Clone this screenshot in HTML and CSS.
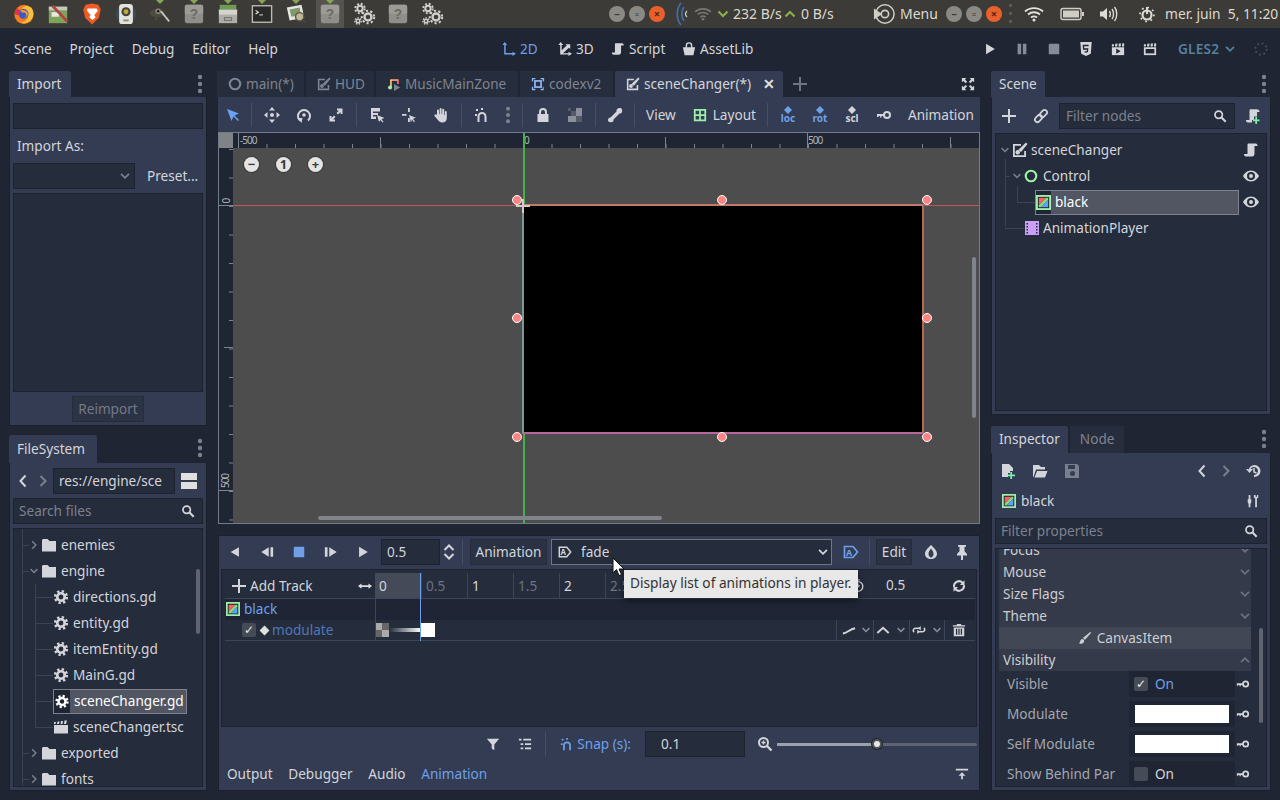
FILE: index.html
```html
<!DOCTYPE html>
<html lang="fr">
<head>
<meta charset="utf-8">
<title>Godot editor</title>
<link rel="stylesheet" href="styles.css">
</head>
<body>
<svg class="defs" width="0" height="0" aria-hidden="true">
  <symbol id="chev-d" viewBox="0 0 16 16"><path d="M3.5 5.5 8 10l4.5-4.5" fill="none" stroke="currentColor" stroke-width="2"/></symbol>
  <symbol id="chev-u" viewBox="0 0 16 16"><path d="M3.5 10.500 8 6l4.500 4.500" fill="none" stroke="currentColor" stroke-width="2"/></symbol>
  <symbol id="chev-r" viewBox="0 0 16 16"><path d="M5.500 3 10.500 8l-5 5" fill="none" stroke="currentColor" stroke-width="2"/></symbol>
  <symbol id="chev-l" viewBox="0 0 16 16"><path d="M10.500 2.500 5.500 8l5 5.500" fill="none" stroke="currentColor" stroke-width="2"/></symbol>
  <symbol id="gear" viewBox="-1 -1 18 18"><circle cx="8" cy="8" r="4.200" fill="none" stroke="currentColor" stroke-width="3"/><circle cx="8" cy="8" r="6.500" fill="none" stroke="currentColor" stroke-width="3" stroke-dasharray="2.550 2.550"/></symbol>
  <symbol id="folder" viewBox="0 0 16 16"><path d="M2 2h4.500l2 2H15v10.500H1V3z" fill="currentColor"/></symbol>
  <symbol id="scene-file" viewBox="0 0 16 16"><path d="M1 6h14v8.500H1z" fill="currentColor"/><path d="M1 3h2l-.5 2H1zm3.500-.5h2L6 5H4zm3.500-.5h2L9.500 5h-2zm3.500-.5h2.500L13 5h-2z" fill="currentColor"/></symbol>
  <symbol id="search" viewBox="0 0 16 16"><circle cx="6.500" cy="6.500" r="4.200" fill="none" stroke="currentColor" stroke-width="2"/><path d="m9.500 9.500 5 5" stroke="currentColor" stroke-width="2.400"/></symbol>
  <symbol id="key" viewBox="0 0 16 16"><circle cx="11" cy="8" r="3" fill="none" stroke="currentColor" stroke-width="2"/><path d="M1 7h7v2H5.500v1.500H4V9H2.500v1H1z" fill="currentColor"/></symbol>
  <symbol id="eye" viewBox="0 0 16 16"><path d="M8 2.500C4 2.500 1.500 5.500 0 8c1.500 2.500 4 5.500 8 5.500s6.500-3 8-5.500c-1.500-2.500-4-5.500-8-5.500zm0 1.500a4 4 0 1 1 0 8 4 4 0 0 1 0-8z" fill="currentColor"/><circle cx="8" cy="8" r="2" fill="currentColor"/></symbol>
  <symbol id="script" viewBox="0 0 16 16"><path d="M5 1.500h7.500c1.500 0 2 1 2 2.500h-3v7.500c0 2-1 3-2.500 3H3c-1.500 0-2-1-2-2.500h3.500V3c0-1 .5-1.500.5-1.500z" fill="currentColor"/></symbol>
  <symbol id="script-add" viewBox="0 0 16 16"><path d="M5 1.500h7.500c1.500 0 2 1 2 2.500h-3v4H9v2H7v2H4.500H1c0 1.500.5 2.500 2 2.500h4V12" fill="currentColor"/><path d="M4.500 12V3c0-1 .5-1.500.5-1.500h7v7H9v3.500z" fill="currentColor"/><path d="M12 9v2.500h2.500v1.700H12V16h-1.700v-2.800H8v-1.700h2.300V9z" fill="#7cf0a8"/></symbol>
  <symbol id="link" viewBox="0 0 16 16"><g fill="none" stroke="currentColor" stroke-width="1.800"><rect x="8" y="1.500" width="5" height="8" rx="2.500" transform="rotate(45 10.500 5.500)"/><rect x="3" y="6.500" width="5" height="8" rx="2.500" transform="rotate(45 5.500 10.500)"/></g></symbol>
  <symbol id="plus" viewBox="0 0 16 16"><path d="M7 1h2v6h6v2H9v6H7V9H1V7h6z" fill="currentColor"/></symbol>
  <symbol id="ring" viewBox="0 0 16 16"><circle cx="8" cy="8" r="6" fill="none" stroke="currentColor" stroke-width="2.400"/></symbol>
  <symbol id="colorrect" viewBox="0 0 16 16"><rect width="16" height="16" fill="#9ef0a8"/><rect x="2" y="2" width="12" height="12" fill="#1a1f2b"/><path d="M3 3h8L3 11z" fill="#ff5f5f"/><path d="M13 5v8H5z" fill="#5fa0ff"/><path d="M11 3h2v2l-8 8H3v-2z" fill="#7ee07e"/></symbol>
  <symbol id="animplayer" viewBox="0 0 16 16"><path d="M1 1h14v14H1z" fill="#c9a0f5"/><path d="M2.500 3h1.500v1.500H2.500zm0 3h1.500v1.500H2.500zm0 3h1.500v1.500H2.500zm0 3h1.500v1.500H2.500zm9.500-9h1.500v1.500H12zm0 3h1.500v1.500H12zm0 3h1.500v1.500H12zm0 3h1.500v1.500H12z" fill="#252c3b"/></symbol>
  <symbol id="scene2d" viewBox="0 0 16 16"><path d="M1 2h8v1.800H2.800v9.400h9.400V9H14v6H1z" fill="currentColor"/><path d="M14 .5l1.500 1.500-6.500 8-2.800-2z" fill="currentColor"/><circle cx="5.700" cy="10.300" r="2.200" fill="currentColor"/></symbol>
  <symbol id="music" viewBox="0 0 16 16"><path d="M4 3.500h9" stroke="#ff9a6a" stroke-width="2"/><path d="M4.500 3v8" stroke="#ffd080" stroke-width="1.800"/><circle cx="3.500" cy="12" r="2.300" fill="#9ef0a8"/><path d="M12.500 3v5" stroke="#ff7a8a" stroke-width="1.800"/><path d="M8 8l7 4-7 4z" fill="currentColor"/></symbol>
  <symbol id="viewport" viewBox="0 0 16 16"><path d="M1 5V1h4v1.500H2.500V5zm10-4h4v4h-1.500V2.500H11zM1 11h1.500v2.500H5V15H1zm13.500 0V15H11v-1.500h2.500V11z" fill="#8eb5f5"/><rect x="4.500" y="4.500" width="7" height="7" fill="none" stroke="#8eb5f5" stroke-width="2"/></symbol>
  <symbol id="fullscreen" viewBox="0 0 16 16"><path d="M1 1h5L4.500 2.800 7 5.300 5.300 7 2.800 4.500 1 6zm14 0v5l-1.800-1.500L10.700 7 9 5.300l2.500-2.500L10 1zM1 15v-5l1.800 1.500L5.300 9 7 10.700l-2.500 2.500L6 15zm14 0h-5l1.500-1.800L9 10.700 10.700 9l2.500 2.500L15 10z" fill="currentColor"/></symbol>
  <symbol id="dots" viewBox="0 0 6 20"><circle cx="3" cy="3" r="2.200" fill="currentColor"/><circle cx="3" cy="10" r="2.200" fill="currentColor"/><circle cx="3" cy="17" r="2.200" fill="currentColor"/></symbol>
  <symbol id="select" viewBox="0 0 16 16"><path d="M2 2l12 4.500-4.500 2L14 13l-1 1-4.500-4.500L6.500 14z" fill="#6aa2f5"/></symbol>
  <symbol id="move" viewBox="0 0 16 16"><path d="M8 0l3 3.500H5zm0 16l-3-3.500h6zM0 8l3.500-3v6zm16 0-3.500 3V5z" fill="currentColor"/><circle cx="8" cy="8" r="2" fill="currentColor"/></symbol>
  <symbol id="rotate" viewBox="0 0 16 16"><path d="M4 13.500a6 6 0 1 1 8 0" fill="none" stroke="currentColor" stroke-width="2"/><path d="M1.500 11l5 0-1 5z" fill="currentColor"/><circle cx="8" cy="8" r="1.800" fill="currentColor"/></symbol>
  <symbol id="scale" viewBox="0 0 16 16"><path d="M9 1.500h5.500V7h-2V5L10 7.500 8.500 6 11 3.500H9zM5 12.500h2v2H1.500V9h2v2L6 8.500 7.500 10z" fill="currentColor"/></symbol>
  <symbol id="listsel" viewBox="0 0 16 16"><path d="M2 1h9v3.500H4V6h5v2H4v1.500h3V12H2z" fill="currentColor"/><path d="M8 8l7.500 3-3 1.200 2 2.600-1 .7-2-2.600L10 15z" fill="currentColor"/></symbol>
  <symbol id="pivot" viewBox="0 0 16 16"><path d="M7 1h1.800v4H7zM1 7h4.500v1.800H1zm6 4h1.800v4H7z" fill="currentColor"/><path d="M8 8l7 2.800-3 1 2 2.600-1 .8-2-2.600-1 2.800z" fill="currentColor"/></symbol>
  <symbol id="hand" viewBox="0 0 16 16"><path d="M4 7V3.500a1 1 0 0 1 2 0V7h.6V2a1 1 0 0 1 2 0v5h.6V2.800a1 1 0 0 1 2 0V8h.6V5a1 1 0 0 1 2 0v6c0 3-2 4.500-4.500 4.500S5.500 14 4.500 12.500L1.500 9c-.6-1 .8-2 1.700-1z" fill="currentColor"/></symbol>
  <symbol id="magnet" viewBox="0 0 16 16"><path d="M4.500 15V9.500a3.500 3.500 0 0 1 7 0V15" fill="none" stroke="currentColor" stroke-width="2"/><path d="M2 2h2v2H2zM1 7h2v2H1zM7 1h2v2H7z" fill="currentColor"/></symbol>
  <symbol id="lock" viewBox="0 0 16 16"><path d="M2.500 7H4V5a4 4 0 0 1 8 0v2h1.500v8h-11zM6 7h4V5a2 2 0 0 0-4 0z" fill="currentColor"/></symbol>
  <symbol id="group" viewBox="0 0 16 16"><path d="M9 1h6v8H9z" fill="#8a8f99"/><path d="M1 9h8v6H1z" fill="#8a8f99"/><path d="M1 1h3v3H1zm8 8h6v6H9zM4 4h5v5H4z" fill="#555b66"/></symbol>
  <symbol id="bone" viewBox="0 0 16 16"><path d="M13 1c2 0 2.500 2 2 3 .5 1-.5 3-2.500 2.500L6.500 12.500C7 14.500 5 15.500 4 15c-1 .5-3 0-3-2s2-2.500 2.500-2.500l6-6C9 2.500 11 .5 13 1z" fill="currentColor"/></symbol>
  <symbol id="layout" viewBox="0 0 16 16"><path d="M1 1h14v14H1zm2 2v4h4V3zm6 0v4h4V3zM3 9v4h4V9zm6 0v4h4V9z" fill="#9ef0a8"/></symbol>
  <symbol id="diamond" viewBox="0 0 16 18"><path d="M8 0l4 4-4 4-4-4z" fill="currentColor"/></symbol>
  <symbol id="bl-play" viewBox="0 0 16 16"><path d="M3.500 2l10 6-10 6z" fill="currentColor"/></symbol>
  <symbol id="bl-pause" viewBox="0 0 16 16"><path d="M3 2h4v12H3zm6 0h4v12H9z" fill="currentColor"/></symbol>
  <symbol id="bl-stop" viewBox="0 0 16 16"><rect x="2" y="2" width="12" height="12" rx="1" fill="currentColor"/></symbol>
  <symbol id="html5" viewBox="0 0 16 16"><path d="M1.500 0h13l-1 13.500L8 16l-5.500-2.500z" fill="currentColor"/><path d="M11 4H5l.3 4h4.600l-.3 3-1.600.5-1.600-.5" fill="none" stroke="#1f2532" stroke-width="1.500"/></symbol>
  <symbol id="clap-play" viewBox="0 0 16 16"><path d="M1 6h14v9H1z" fill="currentColor"/><path d="M1 2.500h2.500L3 5H1zM5 2l2.500-.2L7 5H4.500zM9 1.800h2.500L11 5H8.500zM13 1.500h2V5h-2.500z" fill="currentColor"/><path d="M6 7.500l5 3-5 3z" fill="#1f2532"/></symbol>
  <symbol id="clap" viewBox="0 0 16 16"><path d="M1 6h14v9H1z" fill="currentColor"/><path d="M3 8h10v5H3z" fill="#1f2532"/><path d="M1 2.500h2.500L3 5H1zM5 2l2.500-.2L7 5H4.500zM9 1.800h2.500L11 5H8.500zM13 1.500h2V5h-2.500z" fill="currentColor"/></symbol>
  <symbol id="axis2d" viewBox="0 0 16 16"><path d="M3 0l3 3.500H4.200v9H12V11l4 2.500L12 16v-1.700H2.500V3.500H.5z" fill="currentColor"/></symbol>
  <symbol id="axis3d" viewBox="0 0 16 16"><path d="M3 0l3 3.500H4.200v6L10 4 8.500 2.500H14V8l-1.500-1.500-6.800 6.300H12V11l4 2.500L12 16v-1.700H2.500V3.500H.5z" fill="currentColor"/></symbol>
  <symbol id="bag" viewBox="0 0 16 16"><path d="M1 6h14l-2 9H3z" fill="currentColor"/><path d="M5 7V4a3 3 0 0 1 6 0v3" fill="none" stroke="currentColor" stroke-width="1.600"/></symbol>
  <symbol id="step-back" viewBox="0 0 16 16"><path d="M10 2.500v11L1.500 8zM12 2.500h3v11h-3z" fill="currentColor"/></symbol>
  <symbol id="step-fwd" viewBox="0 0 16 16"><path d="M1 2.500h3v11H1zM6 2.500 14.500 8 6 13.500z" fill="currentColor"/></symbol>
  <symbol id="back" viewBox="0 0 16 16"><path d="M12.500 2.500v11L3 8z" fill="currentColor"/></symbol>
  <symbol id="updown" viewBox="0 0 16 16"><path d="M3.500 6 8 1.500 12.500 6M3.500 10 8 14.500 12.500 10" fill="none" stroke="currentColor" stroke-width="2"/></symbol>
  <symbol id="anim" viewBox="0 0 16 16"><path d="M1.500 2.500h8.500L14.500 8 10 13.500H1.500z" fill="none" stroke="currentColor" stroke-width="1.700"/></symbol>
  <symbol id="onion" viewBox="0 0 16 16"><path d="M8 1C5 4 2 6.500 2 10c0 3 3 5 6 5s6-2 6-5c0-3.500-3-6-6-9zM8 4.500C9.500 6.500 10.500 8 10.500 10S9 13.500 8 13.500 5.500 12 5.500 10 6.500 6.500 8 4.500z" fill="currentColor" fill-rule="evenodd"/></symbol>
  <symbol id="pin" viewBox="0 0 16 16"><path d="M4 1h8v1.800h-1.500v4.500L13 10v1.500H9V16H7v-4.500H3V10l2.500-2.700V2.800H4z" fill="currentColor"/></symbol>
  <symbol id="loop" viewBox="0 0 16 16"><path d="M2 9A6 6 0 0 1 12 3.800l1.500-1.500V7H9l1.500-1.700A4 4 0 0 0 4 8.700zM14 7a6 6 0 0 1-10 5.200l-1.500 1.500V9H7l-1.500 1.700A4 4 0 0 0 12 7.300z" fill="currentColor"/></symbol>
  <symbol id="clock" viewBox="0 0 16 16"><circle cx="8" cy="8.500" r="5.500" fill="none" stroke="currentColor" stroke-width="1.500"/><path d="M8 5v4l2-1.500M6 1h4" fill="none" stroke="currentColor" stroke-width="1.500"/></symbol>
  <symbol id="curve" viewBox="0 0 16 16"><path d="M1 12c5 0 7-5 14-6" fill="none" stroke="currentColor" stroke-width="2.200"/></symbol>
  <symbol id="cap" viewBox="0 0 16 16"><path d="M1.500 11.500 8 5.500l6.500 6" fill="none" stroke="currentColor" stroke-width="2.200"/></symbol>
  <symbol id="wrap" viewBox="0 0 16 16"><path d="M10 3.500 7 6l3 2.500zM6 7.500 9 10l-3 2.500z" fill="currentColor"/><path d="M8 6H4a2.500 2.500 0 0 0-1.500 4.500M8 10h4a2.500 2.500 0 0 0 1.500-4.500" fill="none" stroke="currentColor" stroke-width="1.800"/></symbol>
  <symbol id="trash" viewBox="0 0 16 16"><path d="M5.500 1h5v1.500H15V4H1V2.500h4.500zM2 5h12v10H2zm2.500 1.500V13.500H6V6.500zm2.800 0v7h1.400v-7zm2.700 0v7h1.500v-7z" fill="currentColor"/></symbol>
  <symbol id="filter" viewBox="0 0 16 16"><path d="M1 2h14L9.500 8.500V15l-3-2V8.500z" fill="currentColor"/></symbol>
  <symbol id="tracks" viewBox="0 0 16 16"><path d="M1 2h3v2H1zm5 0h9v2H6zM3 7h3v2H3zm5 0h7v2H8zm-5 5h3v2H3zm5 0h7v2H8z" fill="currentColor"/></symbol>
  <symbol id="zoomin" viewBox="0 0 16 16"><circle cx="6.500" cy="6.500" r="4.500" fill="none" stroke="currentColor" stroke-width="2"/><path d="m10 10 4.500 4.500" stroke="currentColor" stroke-width="2.400"/><path d="M4.500 5.800h1.300V4.500h1.400v1.300h1.300v1.400H7.200v1.300H5.800V7.200H4.500z" fill="currentColor"/></symbol>
  <symbol id="collapse" viewBox="0 0 16 16"><path d="M1 2h14v2H1zM8 6l4 4H9v4H7v-4H4z" fill="currentColor"/></symbol>
  <symbol id="file-add" viewBox="0 0 16 16"><path d="M2 1h7l4 4v3h-3v2H8v4H2z" fill="currentColor"/><path d="M12 9v2.500h3v1.700h-3V16h-1.700v-2.800H8v-1.700h2.300V9z" fill="#7cf0a8"/></symbol>
  <symbol id="folder-open" viewBox="0 0 16 16"><path d="M1 2h6l2 2h4v2.500H4L1.500 14H1zM5 8h10.500L13 14.500H2.500z" fill="currentColor"/></symbol>
  <symbol id="save" viewBox="0 0 16 16"><path d="M1 1h12l2 2v12H1zm3 1v4h7V2zm4.500 6a2.500 2.500 0 1 0 0 5 2.500 2.500 0 0 0 0-5z" fill="currentColor" fill-rule="evenodd"/></symbol>
  <symbol id="history" viewBox="0 0 16 16"><path d="M2.500 8A6 6 0 1 1 8 14v-2a4 4 0 1 0-3.500-6H7L3.500 10 0 6h2.500z" fill="currentColor"/><path d="M8 5v4l2.500 1" fill="none" stroke="currentColor" stroke-width="1.500"/></symbol>
  <symbol id="tools" viewBox="0 0 16 16"><path d="M3 1h2v5h1v4L5 11v4H3v-4L2 10V6h1z" fill="currentColor"/><path d="M9 1v3l1.500 1v10h2V5L14 4V1h-1.500v2h-1.500V1z" fill="currentColor"/></symbol>
  <symbol id="brush" viewBox="0 0 16 16"><path d="M14 1l1 1-7 8-2.500-2z" fill="currentColor"/><path d="M4.500 9c2 0 3 1.500 2.500 3-.5 2-3 3-6 2.500 1.500-1 1-4.500 3.500-5.500z" fill="currentColor"/></symbol>
  <symbol id="hsize" viewBox="0 0 16 16"><path d="M0 8l4-3v2h8V5l4 3-4 3V9H4v2z" fill="currentColor"/></symbol>
  <symbol id="grip" viewBox="0 0 4 24"><rect y="2" width="3" height="3" fill="currentColor"/><rect y="10" width="3" height="3" fill="currentColor"/><rect y="18" width="3" height="3" fill="currentColor"/></symbol>
  <symbol id="gears" viewBox="0 0 24 24"><circle cx="8" cy="6.500" r="2.700" fill="none" stroke="currentColor" stroke-width="2"/><circle cx="8" cy="6.500" r="4.800" fill="none" stroke="currentColor" stroke-width="1.800" stroke-dasharray="2 1.800"/><circle cx="16" cy="15" r="3.500" fill="none" stroke="currentColor" stroke-width="2.400"/><circle cx="16" cy="15" r="6.200" fill="none" stroke="currentColor" stroke-width="2" stroke-dasharray="2.200 2.200"/><circle cx="6" cy="19" r="1.800" fill="none" stroke="currentColor" stroke-width="1.500"/><circle cx="6" cy="19" r="3.200" fill="none" stroke="currentColor" stroke-width="1.300" stroke-dasharray="1.500 1.300"/></symbol>
  <symbol id="unknown" viewBox="0 0 24 24"><rect x="2" y="2" width="20" height="20" rx="2" fill="#8f8e89"/><rect x="2" y="2" width="20" height="10" rx="2" fill="#9c9b96"/></symbol>
  <symbol id="firefox" viewBox="0 0 24 24"><circle cx="12" cy="12.500" r="10.500" fill="#ff7a1a"/><path d="M20 5c3 4 3 9 0 13-3 4-9 5-13 3 5 .5 9-2 9-6 0-3-3-4-5-3.500C10 10 12 8 14 8c-1-2-3-2-5-1.500C11 3 16 2 20 5z" fill="#f5c13c"/><circle cx="11.500" cy="12" r="5.500" fill="#3d59c9"/><path d="M8 8c3-1 7 0 8 3s-2 6-5 5.500c3 0 4-2 3.500-4S12 10 10 10.500z" fill="#ff9a30"/><path d="M2 12c0-3 1-5 3-7 0 2 1 3 3 3l-2 5c-2 0-3 0-4-1z" fill="#e0324e"/></symbol>
  <symbol id="tool" viewBox="0 0 24 24"><rect x="2" y="4" width="20" height="18" fill="#7fa35a"/><rect x="2" y="4" width="20" height="4" fill="#c7c6c0"/><rect x="5" y="10" width="8" height="5" fill="#e7e6e0"/><path d="M6 3 22 20" stroke="#b0413e" stroke-width="3"/></symbol>
  <symbol id="brave" viewBox="0 0 24 24"><path d="M5 2 12 .5 19 2l2.500 5-2 9-7.500 7.500L4.500 16l-2-9z" fill="#f05a23"/><path d="M7 6h10l1.500 2.500-4 4.500 1.500 2.500-3.500 3-3.500-3 1.500-2.500-4-4.500z" fill="#fff"/></symbol>
  <symbol id="phone" viewBox="0 0 24 24"><circle cx="12" cy="12" r="11" fill="#3c4a5a"/><rect x="4.500" y="1" width="15" height="22" rx="3.500" fill="#e4e4dc"/><circle cx="12" cy="9.500" r="5" fill="#45443c"/><circle cx="12" cy="9.500" r="2.700" fill="#c2a83c"/><rect x="9" y="18" width="6" height="2" fill="#888"/></symbol>
  <symbol id="gimp" viewBox="0 0 24 24"><ellipse cx="9" cy="11" rx="8" ry="4.500" fill="#4f4b3e"/><circle cx="10" cy="9" r="3" fill="#8c8a80"/><circle cx="10" cy="9" r="1.300" fill="#111"/><path d="M13 9l9 11" stroke="#c9c7bc" stroke-width="2"/><path d="M9 15l-2 4" stroke="#4f4b3e" stroke-width="2"/></symbol>
  <symbol id="archive" viewBox="0 0 24 24"><rect x="3" y="2" width="18" height="5" fill="#6f9a54"/><rect x="2" y="7" width="20" height="6" fill="#d4d3cd"/><rect x="2" y="13" width="20" height="9" fill="#aeada7"/><rect x="8" y="16" width="8" height="3" fill="none" stroke="#6a6964"/></symbol>
  <symbol id="terminal" viewBox="0 0 24 24"><rect x="1.500" y="3" width="21" height="18" fill="#2a2a28" stroke="#bab9b3" stroke-width="1.500"/><path d="m5 8 3 2-3 2" fill="none" stroke="#eee" stroke-width="1.200"/><path d="M9 13h4" stroke="#eee"/></symbol>
  <symbol id="viewer" viewBox="0 0 24 24"><path d="M2 5 18 2l3 14-16 3z" fill="#e6e5df"/><path d="M5 7l11-2 1.500 8L7 15z" fill="#7f9a6a"/><circle cx="16" cy="15" r="4.500" fill="#c0b690" stroke="#55544f" stroke-width="1.500"/><path d="m19 18 4 4" stroke="#45443f" stroke-width="2"/></symbol>
  <symbol id="menu-ic" viewBox="0 0 24 24"><circle cx="13" cy="12" r="10" fill="none" stroke="#cfcdc5" stroke-width="1.600"/><circle cx="13" cy="12" r="4" fill="none" stroke="#cfcdc5" stroke-width="1.800"/><path d="M1 6l9 6-9 6z" fill="#cfcdc5"/></symbol>
  <symbol id="wifi" viewBox="0 0 20 16"><path d="M1 5.500c5-4.500 13-4.500 18 0M4 8.500c3.500-3 8.500-3 12 0M7 11.500c2-1.500 4-1.500 6 0" fill="none" stroke="currentColor" stroke-width="1.800"/><circle cx="10" cy="14" r="1.500" fill="currentColor"/></symbol>
  <symbol id="battery" viewBox="0 0 24 14"><rect x="1" y="1.500" width="20" height="11" rx="2" fill="none" stroke="currentColor" stroke-width="1.500"/><rect x="3" y="3.500" width="16" height="7" fill="currentColor"/><rect x="22" y="5" width="2" height="4" fill="currentColor"/></symbol>
  <symbol id="volume" viewBox="0 0 20 16"><path d="M1 5.500h3L8 2v12l-4-3.500H1z" fill="currentColor"/><path d="M10.500 5c1 1.500 1 4.500 0 6M13 3c2 2.500 2 7.500 0 10M15.500 1c3 3.500 3 10.500 0 14" fill="none" stroke="currentColor" stroke-width="1.400"/></symbol>
  <symbol id="power" viewBox="0 0 16 16"><circle cx="8" cy="9" r="4.500" fill="none" stroke="currentColor" stroke-width="2.200"/><path d="M8 1v7" stroke="currentColor" stroke-width="2"/><circle cx="8" cy="8.500" r="7" fill="none" stroke="currentColor" stroke-width="1.700" stroke-dasharray="1.800 3.700"/></symbol>
  <symbol id="waves" viewBox="0 0 16 24"><path d="M6 1C1 7 1 17 6 23M9 5C6 9 6 15 9 19" fill="none" stroke="#3f6fa8" stroke-width="1.700"/><path d="M12 9c-2 2-2 4 0 6" fill="none" stroke="#c9c8c2" stroke-width="1.300"/></symbol>
  <symbol id="spinner" viewBox="0 0 16 16"><circle cx="8" cy="8" r="6.500" fill="none" stroke="currentColor" stroke-width="2" stroke-dasharray="2 3.100"/></symbol>
</svg>

<div class="page">
  <header class="topbar">
    <div class="apps">
      <span class="app"><svg class="app-i"><use href="#firefox"/></svg></span>
      <span class="app"><svg class="app-i"><use href="#tool"/></svg></span>
      <span class="app"><svg class="app-i"><use href="#brave"/></svg></span>
      <span class="app"><svg class="app-i"><use href="#phone"/></svg></span>
      <span class="app run"><svg class="app-i"><use href="#gimp"/></svg></span>
      <span class="app run"><svg class="app-i" viewBox="0 0 24 24"><use href="#unknown"/><text class="q-text" x="12" y="17.500">?</text></svg></span>
      <span class="app run"><svg class="app-i"><use href="#archive"/></svg></span>
      <span class="app run"><svg class="app-i"><use href="#terminal"/></svg></span>
      <span class="app run"><svg class="app-i"><use href="#viewer"/></svg></span>
      <span class="app run active"><svg class="app-i" viewBox="0 0 24 24"><use href="#unknown"/><text class="q-text" x="12" y="17.500">?</text></svg></span>
      <span class="app"><svg class="app-i gears"><use href="#gears"/></svg></span>
      <span class="app"><svg class="app-i" viewBox="0 0 24 24"><use href="#unknown"/><text class="q-text" x="12" y="17.500">?</text></svg></span>
      <span class="app"><svg class="app-i gears"><use href="#gears"/></svg></span>
    </div>
    <div class="winbtns">
      <span class="wb">–</span><span class="wb">▫</span><span class="wb close">×</span>
    </div>
    <svg class="tb-waves"><use href="#waves"/></svg>
    <svg class="tb-wifi-dim"><use href="#wifi"/></svg>
    <svg class="tb-chev"><use href="#chev-d"/></svg>
    <span class="tb-text speed-down">232 B/s</span>
    <svg class="tb-chev"><use href="#chev-u"/></svg>
    <span class="tb-text speed-up">0 B/s</span>
    <svg class="tb-menu"><use href="#menu-ic"/></svg>
    <span class="tb-text menu-label">Menu</span>
    <div class="winbtns second">
      <span class="wb">–</span><span class="wb">▫</span><span class="wb close">×</span>
    </div>
    <svg class="tb-grip"><use href="#grip"/></svg>
    <svg class="tb-wifi"><use href="#wifi"/></svg>
    <svg class="tb-battery"><use href="#battery"/></svg>
    <svg class="tb-volume"><use href="#volume"/></svg>
    <svg class="tb-power"><use href="#power"/></svg>
    <span class="tb-text clock-label">mer. juin  5, 11:20</span>
  </header>

  <nav class="menubar">
    <div class="menus"><span>Scene</span><span>Project</span><span>Debug</span><span>Editor</span><span>Help</span></div>
    <div class="modes">
      <span class="mode current mode-2d"><svg class="i14"><use href="#axis2d"/></svg>2D</span>
      <span class="mode mode-3d"><svg class="i14"><use href="#axis3d"/></svg>3D</span>
      <span class="mode mode-script"><svg class="i14"><use href="#script"/></svg>Script</span>
      <span class="mode mode-asset"><svg class="i14"><use href="#bag"/></svg>AssetLib</span>
    </div>
    <div class="runbtns">
      <svg class="i14 run-btn"><use href="#bl-play"/></svg>
      <svg class="i14 run-btn dim"><use href="#bl-pause"/></svg>
      <svg class="i14 run-btn dim"><use href="#bl-stop"/></svg>
      <svg class="i14 run-btn"><use href="#html5"/></svg>
      <svg class="i14 run-btn"><use href="#clap-play"/></svg>
      <svg class="i14 run-btn"><use href="#clap"/></svg>
      <span class="gles">GLES2</span>
      <svg class="i14 gles-chev"><use href="#chev-d"/></svg>
      <svg class="i14 spin"><use href="#spinner"/></svg>
    </div>
  </nav>

  <main class="workspace">
    <section class="col">
      <div class="tabs">
        <span class="tab on import-tab">Import</span>
        <svg class="dock-dots"><use href="#dots"/></svg>
      </div>
      <div class="panel import-panel">
        <div class="field"></div>
        <div class="label-row">Import As:</div>
        <div class="select-row">
          <div class="field select-empty"><svg class="i14 dim2"><use href="#chev-d"/></svg></div>
          <span class="preset">Preset...</span>
        </div>
        <div class="field list-empty"></div>
        <div class="reimport-row"><span class="btn-disabled">Reimport</span></div>
      </div>
      <div class="tabs fs-tabs">
        <span class="tab on">FileSystem</span>
        <svg class="dock-dots"><use href="#dots"/></svg>
      </div>
      <div class="panel fs-panel">
        <div class="path-row">
          <svg class="i16 nav-l"><use href="#chev-l"/></svg>
          <svg class="i16 nav-r dim2"><use href="#chev-r"/></svg>
          <div class="field path">res://engine/sce</div>
          <span class="split"></span>
        </div>
        <div class="field search"><span class="ph">Search files</span><svg class="i14"><use href="#search"/></svg></div>
        <div class="tree fs-tree">
          <div class="row l1"><svg class="arrow dim2"><use href="#chev-r"/></svg><svg class="folder"><use href="#folder"/></svg><span>enemies</span></div>
          <div class="row l1"><svg class="arrow dim2"><use href="#chev-d"/></svg><svg class="folder"><use href="#folder"/></svg><span>engine</span></div>
          <div class="row l2"><svg class="i16"><use href="#gear"/></svg><span>directions.gd</span></div>
          <div class="row l2"><svg class="i16"><use href="#gear"/></svg><span>entity.gd</span></div>
          <div class="row l2"><svg class="i16"><use href="#gear"/></svg><span>itemEntity.gd</span></div>
          <div class="row l2"><svg class="i16"><use href="#gear"/></svg><span>MainG.gd</span></div>
          <div class="row l2 picked"><div class="sel fs-sel"><svg class="i16"><use href="#gear"/></svg><span>sceneChanger.gd</span></div></div>
          <div class="row l2"><svg class="i16"><use href="#scene-file"/></svg><span>sceneChanger.tsc</span></div>
          <div class="row l1"><svg class="arrow dim2"><use href="#chev-r"/></svg><svg class="folder"><use href="#folder"/></svg><span>exported</span></div>
          <div class="row l1"><svg class="arrow dim2"><use href="#chev-r"/></svg><svg class="folder"><use href="#folder"/></svg><span>fonts</span></div>
          <span class="vscroll fs-scroll"></span>
        </div>
      </div>
    </section>

    <section class="col">
      <div class="tabs scene-tabs">
        <span class="tab off st1"><svg class="i14"><use href="#ring"/></svg>main(*)</span>
        <span class="tab off st2"><svg class="i14"><use href="#scene2d"/></svg>HUD</span>
        <span class="tab off st3"><svg class="i14"><use href="#music"/></svg>MusicMainZone</span>
        <span class="tab off st4"><svg class="i14"><use href="#viewport"/></svg>codexv2</span>
        <span class="tab on st5"><svg class="i14"><use href="#scene2d"/></svg>sceneChanger(*)<span class="tab-x">✕</span></span>
        <svg class="i16 tab-add"><use href="#plus"/></svg>
        <svg class="i14 tab-full"><use href="#fullscreen"/></svg>
      </div>
      <div class="toolbar">
        <span class="tb first"><svg class="i16"><use href="#select"/></svg></span><i class="sep"></i>
        <span class="tb"><svg class="i16"><use href="#move"/></svg></span>
        <span class="tb"><svg class="i16"><use href="#rotate"/></svg></span>
        <span class="tb"><svg class="i16"><use href="#scale"/></svg></span><i class="sep"></i>
        <span class="tb"><svg class="i16"><use href="#listsel"/></svg></span>
        <span class="tb"><svg class="i16"><use href="#pivot"/></svg></span>
        <span class="tb"><svg class="i16"><use href="#hand"/></svg></span><i class="sep"></i>
        <span class="tb"><svg class="i16"><use href="#magnet"/></svg></span>
        <span class="tb narrow"><svg class="tb-dots"><use href="#dots"/></svg></span><i class="sep"></i>
        <span class="tb"><svg class="i16"><use href="#lock"/></svg></span>
        <span class="tb"><svg class="i16"><use href="#group"/></svg></span><i class="sep"></i>
        <span class="tb bone"><svg class="i16"><use href="#bone"/></svg></span><i class="sep"></i>
        <span class="tb-label view">View</span>
        <span class="tb-label layout"><svg class="i14"><use href="#layout"/></svg>Layout</span><i class="sep"></i>
        <span class="tb key-loc blue"><svg class="kf" viewBox="0 0 16 18"><use href="#diamond"/><text class="kf-text" x="8" y="16">loc</text></svg></span>
        <span class="tb blue"><svg class="kf" viewBox="0 0 16 18"><use href="#diamond"/><text class="kf-text" x="8" y="16">rot</text></svg></span>
        <span class="tb"><svg class="kf" viewBox="0 0 16 18"><use href="#diamond"/><text class="kf-text" x="8" y="16">scl</text></svg></span>
        <span class="tb"><svg class="i16"><use href="#key"/></svg></span>
        <span class="tb-label anim-label">Animation</span>
      </div>
      <div class="viewport">
        <div class="ruler-top">
          <svg class="ruler-svg" width="746" height="15"><defs><pattern id="tickx" x="5" width="28.500" height="15" patternUnits="userSpaceOnUse"><rect y="11" width="1" height="4" fill="#7d838f"/></pattern></defs><rect width="746" height="15" fill="url(#tickx)"/></svg>
          <span class="rlabel rx0">-500</span><span class="rlabel rx1">0</span><span class="rlabel rx2">500</span>
          <i class="rmajor rm0"></i><i class="rmajor rm1"></i><i class="rmajor rm2"></i><i class="rmajor rm3"></i><i class="rmajor rm4"></i><i class="rmajor rm5"></i>
        </div>
        <div class="ruler-left">
          <svg class="ruler-svg" width="14" height="375"><defs><pattern id="ticky" y="1" width="14" height="28.500" patternUnits="userSpaceOnUse"><rect x="10" width="4" height="1" fill="#7d838f"/></pattern></defs><rect width="14" height="375" fill="url(#ticky)"/></svg>
        </div>
        <span class="rlabel vl0">0</span><span class="rlabel vl1">500</span>
        <i class="vmajor vm0"></i><i class="vmajor vm1"></i><i class="vmajor vm2"></i>
        <span class="corner"></span>
        <div class="zoomers">
          <span class="zb">−</span><span class="zb">1</span><span class="zb">+</span>
        </div>
        <i class="axis-h"></i><i class="axis-v"></i>
        <div class="rect-black"></div>
        <i class="cross-h"></i><i class="cross-v"></i>
        <i class="handle h1"></i><i class="handle h2"></i><i class="handle h3"></i><i class="handle h4"></i><i class="handle h5"></i><i class="handle h6"></i><i class="handle h7"></i><i class="handle h8"></i>
        <i class="sb-h"></i><i class="sb-v"></i>
      </div>

      <div class="panel bottom-panel">
        <div class="transport">
          <span class="tb"><svg class="i14"><use href="#back"/></svg></span>
          <span class="tb"><svg class="i14"><use href="#step-back"/></svg></span>
          <span class="tb blue"><svg class="i14"><use href="#bl-stop"/></svg></span>
          <span class="tb"><svg class="i14"><use href="#step-fwd"/></svg></span>
          <span class="tb"><svg class="i14"><use href="#bl-play"/></svg></span>
          <div class="field t-input">0.5</div>
          <span class="t-spin"><svg class="i16"><use href="#updown"/></svg></span>
          <i class="sep t-sep"></i>
          <span class="btn-dark anim-btn">Animation</span>
          <div class="field anim-select"><svg class="i14" viewBox="0 0 16 16"><use href="#anim"/><text class="a-text" x="6" y="11.500">A</text></svg><span class="fade">fade</span><svg class="i14 sel-chev"><use href="#chev-d"/></svg></div>
          <svg class="i16 anim-blue" viewBox="0 0 16 16"><use href="#anim"/><text class="a-text" x="6" y="11.500">A</text></svg>
          <i class="sep edit-sep"></i>
          <span class="btn-dark edit-btn">Edit</span>
          <svg class="i16 onion"><use href="#onion"/></svg>
          <svg class="i16 pin"><use href="#pin"/></svg>
        </div>
        <div class="timeline">
          <div class="tl-head">
            <div class="tl-left"><svg class="i16"><use href="#plus"/></svg><span class="add-track">Add Track</span><svg class="i14 tl-arrow"><use href="#hsize"/></svg></div>
            <div class="tl-times">
              <span class="cell first-cell">0</span><span class="cell dim-t">0.5</span><span class="cell">1</span><span class="cell dim-t">1.5</span><span class="cell">2</span><span class="cell dim-t">2.5</span><span class="cell"></span><span class="cell"></span><span class="cell"></span><span class="cell"></span>
            </div>
            <div class="tl-right">
              <svg class="i14 tl-clock"><use href="#clock"/></svg>
              <span class="field tl-len">0.5</span>
              <svg class="i16 tl-loop"><use href="#loop"/></svg>
            </div>
          </div>
          <div class="tl-node">
            <svg class="i14"><use href="#colorrect"/></svg><span class="blue-t">black</span>
          </div>
          <div class="tl-track">
            <div class="tl-name"><span class="check on-c">✓</span><i class="diamond"></i><span class="blue-m">modulate</span></div>
            <div class="keys"><i class="k-check"></i><i class="k-grad"></i><i class="k-white"></i></div>
            <div class="tl-opts">
              <svg class="i14 o-curve"><use href="#curve"/></svg><svg class="o-chev c1"><use href="#chev-d"/></svg><i class="o-sep"></i>
              <svg class="i14 o-curve2"><use href="#cap"/></svg><svg class="o-chev c2"><use href="#chev-d"/></svg><i class="o-sep"></i>
              <svg class="i14 o-curve3"><use href="#wrap"/></svg><svg class="o-chev c1 c3"><use href="#chev-d"/></svg><i class="o-sep"></i>
              <svg class="i14 o-trash"><use href="#trash"/></svg>
            </div>
          </div>
          <i class="playhead"></i>
        </div>
        <div class="snap-row">
          <svg class="i14"><use href="#filter"/></svg>
          <svg class="i14 sr-tracks"><use href="#tracks"/></svg>
          <i class="sep sr-sep"></i>
          <svg class="i14 sr-snap"><use href="#magnet"/></svg>
          <span class="sr-text">Snap (s):</span>
          <span class="field sr-input">0.1</span>
          <svg class="i16 sr-zoom"><use href="#zoomin"/></svg>
          <span class="slider"><i class="slider-grab"></i></span>
        </div>
        <div class="bottom-tabs">
          <span>Output</span><span>Debugger</span><span>Audio</span><span class="current">Animation</span>
          <svg class="i14 bt-icon"><use href="#collapse"/></svg>
        </div>
      </div>
    </section>

    <section class="col">
      <div class="tabs">
        <span class="tab on">Scene</span>
        <svg class="dock-dots right-dots"><use href="#dots"/></svg>
      </div>
      <div class="panel scene-panel">
        <div class="sc-tools">
          <svg class="i16 sc-plus"><use href="#plus"/></svg>
          <svg class="i16 sc-link"><use href="#link"/></svg>
          <div class="field sc-filter"><span class="ph">Filter nodes</span><svg class="i14"><use href="#search"/></svg></div>
          <svg class="i16 sc-add"><use href="#script-add"/></svg>
        </div>
        <div class="tree sc-tree">
          <div class="row s0"><svg class="arrow dim2"><use href="#chev-d"/></svg><svg class="i14 s0-ic"><use href="#scene2d"/></svg><span>sceneChanger</span><svg class="i16 row-end"><use href="#script"/></svg></div>
          <div class="row s1"><svg class="arrow dim2"><use href="#chev-d"/></svg><svg class="i14 green"><use href="#ring"/></svg><span>Control</span><svg class="i16 row-end"><use href="#eye"/></svg></div>
          <div class="row s2"><div class="sel sc-sel"><svg class="i14"><use href="#colorrect"/></svg><span>black</span></div><svg class="i16 row-end"><use href="#eye"/></svg></div>
          <div class="row s3"><svg class="i14"><use href="#animplayer"/></svg><span>AnimationPlayer</span></div>
        </div>
      </div>
      <div class="tabs insp-tabs">
        <span class="tab on">Inspector</span><span class="tab off node-tab">Node</span>
        <svg class="dock-dots right-dots"><use href="#dots"/></svg>
      </div>
      <div class="panel insp-panel">
        <div class="in-tools">
          <span class="ib"><svg class="i16"><use href="#file-add"/></svg></span>
          <span class="ib"><svg class="i16"><use href="#folder-open"/></svg></span>
          <span class="ib dim3"><svg class="i16"><use href="#save"/></svg></span>
          <span class="ib small push"><svg class="i16"><use href="#chev-l"/></svg></span>
          <span class="ib small dim3"><svg class="i16"><use href="#chev-r"/></svg></span>
          <span class="ib"><svg class="i16"><use href="#history"/></svg></span>
        </div>
        <div class="in-object">
          <svg class="i14"><use href="#colorrect"/></svg><span>black</span>
          <svg class="i14 in-tool"><use href="#tools"/></svg>
        </div>
        <div class="field in-filter"><span class="ph">Filter properties</span><svg class="i14"><use href="#search"/></svg></div>
        <div class="in-box">
          <div class="sec focus">Focus<svg class="sec-ch"><use href="#chev-d"/></svg></div>
          <div class="sec">Mouse<svg class="sec-ch"><use href="#chev-d"/></svg></div>
          <div class="sec">Size Flags<svg class="sec-ch"><use href="#chev-d"/></svg></div>
          <div class="sec">Theme<svg class="sec-ch"><use href="#chev-d"/></svg></div>
          <div class="sec-title"><svg class="i14"><use href="#brush"/></svg>CanvasItem</div>
          <div class="sec">Visibility<svg class="sec-ch"><use href="#chev-u"/></svg></div>
          <div class="prop"><span class="p-name">Visible</span><div class="p-val"><span class="check on-c">✓</span><span class="blue-t">On</span></div><svg class="i14 p-key"><use href="#key"/></svg></div>
          <div class="prop"><span class="p-name">Modulate</span><div class="p-val"><i class="swatch"></i></div><svg class="i14 p-key"><use href="#key"/></svg></div>
          <div class="prop"><span class="p-name">Self Modulate</span><div class="p-val"><i class="swatch"></i></div><svg class="i14 p-key"><use href="#key"/></svg></div>
          <div class="prop"><span class="p-name">Show Behind Par</span><div class="p-val"><span class="check"></span><span>On</span></div><svg class="i14 p-key"><use href="#key"/></svg></div>
          <span class="vscroll in-scroll"></span>
        </div>
      </div>
    </section>
  </main>
</div>

<div class="tooltip">Display list of animations in player.</div>
<svg class="cursor" width="14" height="21" viewBox="0 0 14 21"><path d="M1 1v15l3.500-3.500 2.500 6 2.500-1-2.500-5.500h5z" fill="#fff" stroke="#111"/></svg>
</body>
</html>
```

FILE: styles.css
```css
* { box-sizing: border-box; }
html, body { margin: 0; padding: 0; }
body {
  width: 1280px; height: 800px; overflow: hidden; position: relative;
  background: #1f2532; color: #d3d5da;
  font-family: "Noto Sans", sans-serif; font-size: 13.6px; line-height: 20px;
}
.defs { position: absolute; }
svg { display: block; flex: none; }
i { font-style: normal; display: block; }
.i14 { width: 14px; height: 14px; }
.i16 { width: 16px; height: 16px; }
.kf { width: 16px; height: 18px; }
.q-text { font: 700 15px "Liberation Sans", sans-serif; fill: #6a6964; text-anchor: middle; }
.kf-text { font: 700 10px "Noto Sans", sans-serif; fill: currentColor; text-anchor: middle; }
.a-text { font: 700 9px "Noto Sans", sans-serif; fill: currentColor; text-anchor: middle; }
.dim2 { color: #7a7f8c; }
.dim3 { color: #7a7f8c; }
.page { display: flex; flex-direction: column; height: 800px; }

/* system bar */
.topbar { height: 28px; background: #3c3b37; display: flex; align-items: center; color: #d9d6cd; }
.apps { display: flex; width: 609px; height: 28px; padding-left: 7px; }
.app { width: 34px; height: 28px; display: flex; align-items: center; justify-content: center; position: relative; color: #ddd; }
.app.active { background: #54534e content-box; padding: 0 3px; }
.app.run::before { content: ""; position: absolute; top: 0; left: 13px; border: 4px solid transparent; border-top-color: #87a556; border-bottom: 0; }
.app-i { width: 22px; height: 22px; }
.app-i.gears { width: 24px; height: 24px; color: #d0cfca; }
.winbtns { display: flex; gap: 4px; }
.winbtns.second { margin-left: 8px; }
.wb { width: 16px; height: 16px; border-radius: 50%; background: #8a8983; color: #3c3b37; font-size: 11px; line-height: 16px; text-align: center; font-weight: 700; }
.wb.close { background: #e8602c; color: #5a2410; }
.tb-waves { width: 16px; height: 24px; margin-left: 10px; }
.tb-wifi-dim { width: 18px; height: 14px; margin-left: 3px; color: #77766f; }
.tb-chev { width: 16px; height: 16px; color: #8fb04c; margin-left: 3px; }
.tb-text { font-size: 14px; white-space: pre; color: #dcd9d0; }
.speed-down { width: 46px; margin-left: 2px; }
.speed-up { margin-left: 3px; width: 33px; }
.tb-menu { width: 22px; height: 22px; margin-left: 39px; }
.menu-label { margin-left: 5px; width: 38px; }
.tb-grip { width: 4px; height: 24px; margin-left: 7px; color: #5b5a55; }
.tb-wifi { width: 20px; height: 16px; margin-left: 11px; color: #e4e2da; }
.tb-battery { width: 24px; height: 14px; margin-left: 16px; color: #cfcdc5; }
.tb-volume { width: 20px; height: 16px; margin-left: 15px; color: #dddbd3; }
.tb-power { width: 16px; height: 18px; margin-left: 20px; color: #dddbd3; }
.clock-label { margin-left: 10px; font-size: 13.8px; }

/* menu bar */
.menubar { height: 43px; display: flex; align-items: center; padding-left: 14px; position: relative; padding-bottom: 2px; }
.menus { display: flex; gap: 17.8px; width: 488px; }
.modes { display: flex; }
.mode { display: flex; align-items: center; gap: 4px; }
.mode.current { color: #6ea0ea; }
.mode-2d { width: 56px; }
.mode-3d { width: 53px; }
.mode-script { width: 71px; }
.mode-asset { width: 281px; }
.runbtns { display: flex; align-items: center; margin-left: 20px; }
.run-btn { margin-right: 18px; }
.run-btn.dim { color: #868b97; }
.gles { color: #55809f; font-weight: 600; margin-left: 3px; letter-spacing: .2px; width: 44px; }
.gles-chev { color: #55809f; margin-left: 1px; }
.spin { color: #4a505c; margin-left: 17px; }

/* workspace */
.workspace { display: grid; grid-template-columns: 198px 762px 280px; column-gap: 11px; margin-left: 9px; height: 720px; }
.col { display: flex; flex-direction: column; min-width: 0; }
.tabs { display: flex; height: 26px; position: relative; flex: none; }
.tab { display: flex; align-items: center; padding: 0 8px; height: 26px; gap: 5px; white-space: nowrap; }
.tab.on { background: #333c52; border-radius: 2px 2px 0 0; }
.tab.off { background: #262d3c; color: #7f8491; }
.import-tab { width: 62px; }
.dock-dots { width: 6px; height: 20px; margin: 3px 4px 0 auto; color: #7d828e; }
.right-dots { margin-right: 4px; }
.panel { background: #333c52; border: 1px solid #1b202b; border-top: 0; }
.field { background: #252c3c; border: 1px solid #1c2230; }
.ph { color: #7c818d; }

/* import dock */
.import-panel { height: 329px; padding: 6px 3px 3px; display: flex; flex-direction: column; }
.import-panel > .field:first-child { height: 26px; flex: none; }
.label-row { height: 34px; display: flex; align-items: center; padding-left: 4px; padding-bottom: 1px; flex: none; }
.select-row { display: flex; height: 26px; flex: none; align-items: center; }
.select-empty { width: 122px; height: 26px; display: flex; align-items: center; justify-content: flex-end; padding-right: 2px; color: #7a7f8c; }
.preset { margin-left: 12px; }
.list-empty { flex: 1; margin-top: 4px; }
.reimport-row { display: flex; justify-content: center; margin-top: 4px; flex: none; }
.btn-disabled { width: 72px; height: 26px; background: #2b3345; border: 1px solid #252c3c; color: #747986; text-align: center; line-height: 24px; }

/* filesystem dock */
.fs-tabs { height: 28px; margin-top: 9px; }
.fs-tabs .tab { height: 28px; width: 88px; }
.fs-panel { height: 328px; padding: 5px 3px 0; }
.path-row { display: flex; align-items: center; height: 26px; }
.nav-l { margin-left: 2px; }
.nav-r { margin-left: 4px; }
.path { width: 122px; height: 26px; margin-left: 2px; padding-left: 5px; line-height: 24px; white-space: nowrap; overflow: hidden; }
.split { width: 16px; height: 16px; margin-left: 6px; background: linear-gradient(#e0e0e0 7px, transparent 7px 9px, #e0e0e0 9px); }
.search { height: 26px; margin-top: 4px; display: flex; align-items: center; justify-content: space-between; padding: 0 7px 0 5px; }
.tree { background: #252c3c; border: 1px solid #1c2230; position: relative; overflow: hidden; }
.fs-tree { height: 259px; margin-top: 4px; padding-top: 3px; }
.row { display: flex; align-items: center; height: 26px; position: relative; white-space: nowrap; }
.arrow { width: 12px; height: 12px; }
.folder { width: 16px; height: 16px; margin-left: 1px; }
.l1 { padding-left: 14px; }
.l1 span { margin-left: 4px; }
.l2 { padding-left: 39px; }
.l2 span { margin-left: 4px; }
.fs-tree::before { content: ""; position: absolute; left: 8px; top: 0; bottom: 0; width: 1px; background: #3b4356; }
.fs-tree::after { content: ""; position: absolute; left: 21px; top: 55px; height: 144px; width: 1px; background: #3b4356; }
.l1::before { content: ""; position: absolute; left: 9px; width: 6px; height: 1px; background: #3b4356; }
.l2::before { content: ""; position: absolute; left: 22px; width: 17px; height: 1px; background: #3b4356; }
.sel { display: flex; align-items: center; height: 25px; background: #525662; border: 1px solid #7d828e; color: #fff; }
.sel svg { background: #252c3c; }
.fs-sel { width: 134px; }
.fs-sel svg { width: 16px; height: 23px; padding: 4px 0; background: #1f2532; }
.fs-sel span { margin-left: 4px; }
.vscroll { position: absolute; width: 4px; background: #5f6470; border-radius: 2px; }
.fs-scroll { left: 182px; top: 40px; height: 65px; }

/* tabs of the scenes */
.scene-tabs { margin-left: -1px; gap: 2px; }
.scene-tabs .tab { padding: 0 0 0 11px; gap: 4px; }
.st1 { width: 87px; }
.st2 { width: 68px; }
.st3 { width: 142px; }
.st4 { width: 93px; }
.st5 { width: 168px; }
.tab-x { color: #e0e0e0; margin-left: 7px; font-size: 14px; font-weight: 700; width: 14px; text-align: center; }
.tab-add { color: #6f7582; margin-left: 7px; margin-top: 5px; }
.tab-full { margin-left: auto; margin-right: 5px; margin-top: 6px; }

/* canvas toolbar */
.toolbar { height: 35px; background: #333c52; display: flex; align-items: center; flex: none; padding-top: 1px; }
.tb { width: 32px; display: flex; justify-content: center; align-items: center; }
.tb.first { width: 29px; }
.tb.narrow { width: 20px; }
.tb.bone { width: 30px; }
.tb-dots { width: 6px; height: 18px; color: #7d828e; }
.sep { width: 1px; height: 24px; background: #465065; margin: 0 4px; flex: none; }
.tb-label { white-space: nowrap; }
.view { margin-left: 7px; }
.layout { display: flex; align-items: center; gap: 6px; margin-left: 17px; margin-right: 7px; }
.key-loc { margin-left: 0; }
.anim-label { margin-left: 8px; }

/* canvas */
.viewport { height: 392px; background: #4d4d4d; border: 1px solid #737a88; position: relative; overflow: hidden; flex: none; }
.ruler-top { position: absolute; left: 14px; top: 0; right: 0; height: 15px; background: #1f2532; }
.ruler-left { position: absolute; left: 0; top: 15px; bottom: 0; width: 14px; background: #1f2532; }
.corner { position: absolute; left: 0; top: 0; width: 14px; height: 15px; background: #7f8287; }
.rlabel { position: absolute; font-size: 10px; line-height: 12px; color: #b2b5bb; letter-spacing: -1px; }
.rx0 { left: 7px; top: 1px; }
.rx1 { left: 291px; top: 1px; }
.rx2 { left: 575px; top: 1px; }
.rmajor { position: absolute; top: 0; width: 1px; height: 15px; background: #7d838f; }
.rm0 { left: 5px; }
.rm1 { left: 147px; top: 4px; height: 11px; }
.rm2 { left: 290px; }
.rm3 { left: 432px; top: 4px; height: 11px; }
.rm4 { left: 574px; }
.rm5 { left: 717px; top: 4px; height: 11px; }
.vmajor { position: absolute; left: 0; width: 14px; height: 1px; background: #7d838f; }
.vm0 { top: 72px; }
.vm1 { top: 214px; left: 5px; width: 9px; }
.vm2 { top: 357px; }
.vl0 { left: 1px; top: 62px; transform: rotate(-90deg); transform-origin: center; width: 12px; text-align: center; }
.vl1 { left: -4px; top: 342px; transform: rotate(-90deg); width: 20px; text-align: center; }
.zoomers { position: absolute; left: 25px; top: 24px; display: flex; gap: 17px; }
.zb { width: 15px; height: 15px; border-radius: 50%; background: #e4e4e4; color: #3b3b3b; font-size: 13px; line-height: 15px; text-align: center; font-weight: 700; box-shadow: 0 0 0 1px #3a3a3a; }
.axis-h { position: absolute; left: 14px; right: 0; top: 72px; height: 1px; background: #c4545e; }
.axis-v { position: absolute; left: 304px; top: 0; bottom: 0; width: 2px; background: #46b04e; }
.rect-black { position: absolute; left: 303px; top: 71px; width: 402px; height: 230px; background: #000; border: 2px solid #b5694f; border-top-color: #c07a68; border-left-color: #7a9a9a; border-bottom-color: #b9669f; }
.cross-h { position: absolute; left: 297px; top: 72px; width: 14px; height: 2px; background: #d9c8c8; }
.cross-v { position: absolute; left: 303px; top: 66px; width: 2px; height: 14px; background: #d9c8c8; }
.handle { position: absolute; width: 10px; height: 10px; border-radius: 50%; background: #ff8585; border: 1px solid #fff; margin: -5px 0 0 -5px; }
.h1 { left: 298px; top: 67px; }
.h2 { left: 503px; top: 67px; }
.h3 { left: 708px; top: 67px; }
.h4 { left: 298px; top: 185px; }
.h5 { left: 708px; top: 185px; }
.h6 { left: 298px; top: 304px; }
.h7 { left: 503px; top: 304px; }
.h8 { left: 708px; top: 304px; }
.sb-h { position: absolute; left: 99px; top: 383px; width: 344px; height: 4px; background: #80848a; border-radius: 2px; }
.sb-v { position: absolute; left: 753px; top: 124px; width: 4px; height: 161px; background: #80848a; border-radius: 2px; }

/* bottom panel */
.bottom-panel { height: 256px; margin-top: 11px; padding: 4px 2px 0; border-top: 1px solid #1b202b; display: flex; flex-direction: column; }
.transport { height: 26px; display: flex; align-items: center; flex: none; margin-top: -1px; }
.transport .tb { width: 32px; }
.transport .tb:first-child { margin-left: -2px; }
.blue { color: #6ea0ea; }
.t-input { width: 59px; height: 26px; margin-left: 2px; padding-left: 5px; line-height: 24px; }
.t-spin { margin-left: 1px; }
.t-sep { margin: 0 7px 0 5px; }
.btn-dark { height: 26px; background: #2a3244; border: 1px solid #252c3c; line-height: 24px; text-align: center; }
.anim-btn { width: 77px; }
.anim-select { width: 281px; height: 26px; margin-left: 4px; display: flex; align-items: center; padding-left: 6px; border-color: #707684; }
.fade { margin-left: 9px; }
.sel-chev { margin-left: auto; margin-right: 1px; }
.anim-blue { color: #6ea0ea; margin-left: 11px; }
.edit-sep { margin: 0 6px 0 10px; }
.edit-btn { width: 36px; }
.onion { margin-left: 11px; }
.pin { margin-left: 15px; }
.timeline { height: 158px; margin-top: 4px; background: #252c3c; border: 1px solid #1c2230; padding: 3px 1px 0 3px; position: relative; flex: none; }
.timeline::before { content: ""; position: absolute; left: 153px; top: 29px; width: 1px; height: 42px; background: #3c4559; }
.tl-head { display: flex; height: 26px; border-bottom: 1px solid #3c4559; }
.tl-left { width: 150px; display: flex; align-items: center; padding-left: 6px; }
.add-track { margin-left: 3px; }
.tl-arrow { margin-left: auto; margin-right: 3px; color: #e0e0e0; }
.tl-times { display: flex; width: 461px; overflow: hidden; }
.cell { width: 46px; flex: none; padding-left: 4px; border-left: 1px solid #3c4559; line-height: 25px; }
.first-cell { background: #454a58; border-left: 0; padding-left: 4px; }
.dim-t { color: #6e7380; }
.tl-right { display: flex; align-items: center; flex: 1; border-left: 1px solid #3c4559; }
.tl-clock { margin-left: 14px; }
.tl-len { width: 68px; height: 25px; margin-left: 6px; padding-left: 15px; line-height: 24px; border: 0; }
.tl-loop { margin-left: 12px; }
.tl-node { height: 21px; display: flex; align-items: center; background: #1f2534; padding-left: 1px; padding-bottom: 1px; gap: 4px; }
.blue-t { color: #6ea0ea; }
.tl-track { height: 21px; display: flex; align-items: center; border-bottom: 1px solid #3c4559; }
.tl-name { width: 150px; display: flex; align-items: center; padding-left: 17px; }
.check { width: 14px; height: 14px; border-radius: 2px; background: #464b58; color: #eee; font-size: 12px; line-height: 14px; text-align: center; font-family: "DejaVu Sans", sans-serif; font-weight: 700; flex: none; }
.diamond { width: 7px; height: 7px; background: #e0e0e0; transform: rotate(45deg); margin-left: 5px; }
.blue-m { color: #4f78b8; margin-left: 4px; }
.keys { width: 461px; display: flex; align-items: center; height: 14px; }
.k-check { width: 14px; height: 14px; background: conic-gradient(#666 0 25%, #aaa 0 50%, #666 0 75%, #aaa 0) 0 0 / 14px 14px; }
.k-grad { width: 32px; height: 4px; background: linear-gradient(90deg, transparent, #fff); }
.k-white { width: 14px; height: 14px; background: #fff; }
.tl-opts { display: flex; align-items: center; flex: 1; height: 20px; border-left: 1px solid #3c4559; }
.tl-opts svg { flex: none; }
.o-curve { margin-left: 5px; }
.o-curve2, .o-curve3 { margin-left: 2px; }
.o-chev { width: 12px; height: 12px; color: #8b8f9a; }
.c1 { margin-left: 4px; margin-right: 1px; }
.c2 { margin-left: 5px; margin-right: 2px; }
.c3 { margin-left: 5px; }
.o-sep { width: 1px; height: 20px; background: #3c4559; flex: none; }
.o-trash { margin-left: 7px; }
.playhead { position: absolute; left: 198px; top: 3px; width: 1px; height: 68px; background: #6ea0ea; }
.snap-row { height: 26px; margin-top: 4px; display: flex; align-items: center; justify-content: flex-end; flex: none; }
.sr-tracks { margin-left: 18px; }
.sr-sep { margin: 0 6px 0 13px; }
.sr-snap { margin-left: 8px; color: #6ea0ea; }
.sr-text { color: #6ea0ea; margin-left: 3px; }
.sr-input { width: 100px; height: 26px; margin-left: 14px; padding-left: 15px; line-height: 24px; }
.sr-zoom { margin-left: 12px; }
.slider { width: 200px; height: 3px; margin-left: 4px; background: #5e6470; position: relative; border-radius: 2px; }
.slider-grab { position: absolute; left: 95px; top: -4px; width: 10px; height: 10px; border-radius: 50%; background: #e8e8e8; border: 2px solid #555; box-shadow: 0 0 0 1px #1c2230; }
.slider::before { content: ""; position: absolute; left: 0; top: 0; width: 100px; height: 3px; background: #9da1aa; }
.bottom-tabs { flex: 1; display: flex; align-items: center; gap: 15.7px; padding-left: 6px; }
.bottom-tabs .current { color: #6ea0ea; }
.bt-icon { margin-left: auto; margin-right: 8px; }

/* scene dock */
.scene-panel { height: 318px; padding: 6px 3px 3px; }
.sc-tools { display: flex; align-items: center; height: 26px; }
.sc-plus { margin-left: 6px; }
.sc-link { margin-left: 16px; }
.sc-filter { width: 176px; height: 26px; margin-left: 10px; display: flex; align-items: center; justify-content: space-between; padding: 0 7px 0 6px; }
.sc-add { margin-left: 10px; }
.sc-tree { height: 278px; margin-top: 4px; padding-top: 3px; }
.sc-tree .arrow { flex: none; }
.s0 { padding-left: 3px; }
.s0-ic { margin-left: 1px; width: 16px; height: 16px; }
.s0 span { margin-left: 3px; }
.s1 { padding-left: 15px; }
.s1 .green { color: #9ef0a8; margin-left: 1px; }
.s1 span { margin-left: 5px; }
.s2 { padding-left: 39px; }
.sc-sel { width: 204px; padding-left: 0; }
.sc-sel svg { width: 15px; height: 23px; padding: 4px 0; background: #1f2532; }
.sc-sel span { margin-left: 4px; }
.s3 { padding-left: 28px; }
.s3 svg { width: 16px; height: 16px; }
.s3 span { margin-left: 3px; }
.row-end { position: absolute; left: 247px; }
.sc-tree::before { content: ""; position: absolute; left: 9px; top: 25px; height: 68px; width: 1px; background: #3b4356; }
.sc-tree::after { content: ""; position: absolute; left: 21px; top: 52px; height: 16px; width: 1px; background: #3b4356; }
.s1::before { content: ""; position: absolute; left: 9px; width: 5px; height: 1px; background: #3b4356; }
.s2::before { content: ""; position: absolute; left: 21px; width: 18px; height: 1px; background: #3b4356; }
.s3::before { content: ""; position: absolute; left: 9px; width: 19px; height: 1px; background: #3b4356; }

/* inspector */
.insp-tabs { margin-top: 11px; height: 27px; }
.insp-tabs .tab { height: 27px; padding-bottom: 1px; }
.node-tab { margin-left: 2px; padding: 0 10px 1px; }
.insp-panel { height: 338px; padding: 5px 3px 0; }
.in-tools { display: flex; align-items: center; height: 26px; margin: 0 -3px 0 -3px; }
.ib { width: 32px; display: flex; justify-content: center; }
.ib.small { width: 24px; }
.ib.push { margin-left: auto; }
.in-object { display: flex; align-items: center; height: 26px; margin-top: 4px; padding-left: 7px; gap: 5px; }
.in-tool { margin-left: auto; margin-right: 7px; }
.in-filter { height: 26px; margin-top: 4px; display: flex; align-items: center; justify-content: space-between; padding: 0 8px 0 5px; }
.in-box { height: 239px; margin-top: 4px; background: #252c3c; border: 1px solid #1c2230; overflow: hidden; position: relative; padding-left: 3px; width: 272px; }
.sec { width: 252px; height: 22px; background: #343a49; display: flex; align-items: center; justify-content: space-between; padding: 0 0 0 4px; color: #ccced3; }
.sec.focus { margin-top: -10px; }
.sec-ch { width: 14px; height: 14px; color: #6c717d; margin-right: -1px; }
.sec-title { width: 252px; height: 22px; background: #414755; display: flex; align-items: center; justify-content: center; gap: 5px; color: #ccced3; }
.prop { display: flex; align-items: center; width: 262px; height: 26px; margin-bottom: 4px; padding-left: 8px; }
.p-name { width: 122px; color: #a3a6ae; white-space: nowrap; overflow: hidden; }
.p-val { width: 106px; height: 26px; background: #1f2532; display: flex; align-items: center; gap: 7px; padding-left: 5px; }
.p-key { margin-left: 1px; }
.swatch { width: 94px; height: 18px; background: #fff; margin-left: 1px; }
.in-scroll { left: 263px; top: 79px; height: 95px; }

/* overlays */
.tooltip { position: absolute; left: 624px; top: 570px; width: 234px; height: 28px; background: #e8e8e8; color: #333; font-size: 13.7px; line-height: 26px; padding-left: 6px; white-space: nowrap; overflow: hidden; box-shadow: 0 2px 6px rgba(0,0,0,.55); }
.cursor { position: absolute; left: 612px; top: 557px; }
```
